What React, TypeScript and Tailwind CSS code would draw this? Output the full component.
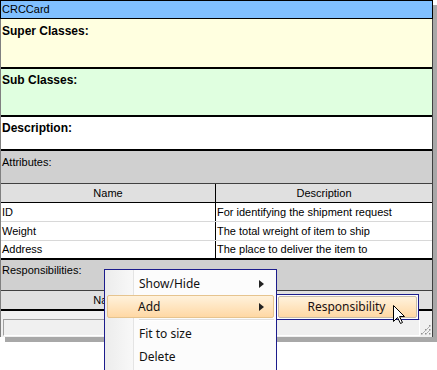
import React from 'react';

const cardFont = { fontFamily: '"Liberation Sans", Arial, sans-serif' };
const menuFont = { fontFamily: '"Noto Sans", "Open Sans", sans-serif' };

const attributes = [
  { name: 'ID', desc: 'For identifying the shipment request' },
  { name: 'Weight', desc: 'The total wreight of item to ship' },
  { name: 'Address', desc: 'The place to deliver the item to' },
];

const Arrow = () => (
  <svg width="5" height="8" viewBox="0 0 5 8" className="shrink-0">
    <path d="M0 0 L5 4 L0 8 Z" fill="#222" />
  </svg>
);

const TableHeader = ({ thick, showDesc = true }: { thick?: boolean; showDesc?: boolean }) => (
  <div className={`flex h-[19px] bg-[#e0e0e0] border-b-black ${thick ? 'h-[20px] border-b-2' : 'border-b'}`}>
    <div className="w-[215px] border-r border-black flex items-center justify-center">Name</div>
    <div className="flex-1 flex items-center justify-center">{showDesc && 'Description'}</div>
  </div>
);

export default function App() {
  return (
    <div className="relative w-[437px] h-[370px] bg-white overflow-hidden text-[11px] text-black" style={cardFont}>
      {/* Card */}
      <div className="w-[433px] shadow-[5px_5px_0_#a8a8a8] border-x border-l-[#808080] border-r-[#404040]">
        {/* Header */}
        <div className="h-[19px] bg-[#80c0ff] border-t border-b border-black flex items-center pl-[1px] -mx-px border-x border-x-black">
          CRCCard
        </div>
        <div className="h-[50px] bg-[#ffffe0] border-b-2 border-black font-bold text-[12px] pl-[1px] pt-[3px]">Super Classes:</div>
        <div className="h-[48px] bg-[#e0ffe0] border-b-2 border-black font-bold text-[12px] pl-[1px] pt-[2px]">Sub Classes:</div>
        <div className="h-[34px] bg-white border-b-2 border-black font-bold text-[12px] pl-[1px] pt-[2px]">Description:</div>
        <div className="h-[33px] bg-[#d0d0d0] border-b border-[#404040] pl-[1px] pt-[3px]">Attributes:</div>
        <TableHeader />
        {attributes.map((a, i) => (
          <div
            key={a.name}
            className={`flex bg-white ${i === attributes.length - 1 ? 'h-[19px] border-b-2 border-black' : 'h-[19px] border-b border-[#d8d8d8]'}`}
          >
            <div className="w-[215px] border-r border-black flex items-center pl-[1px]">{a.name}</div>
            <div className="flex-1 flex items-center pl-[1px]">{a.desc}</div>
          </div>
        ))}
        <div className="h-[31px] bg-[#d0d0d0] border-b border-[#404040] pl-[1px] pt-[2px]">Responsibilities:</div>
        <TableHeader thick showDesc={false} />
        <div className="h-[26px] bg-[#f0f0f0] pt-[8px] pl-[2px] pr-[12px]">
          <div className="h-[17px] border border-[#a0a0a0] border-b-white border-r-white bg-[#f0f0f0]" />
        </div>
      </div>

      {/* Resize grip */}
      <svg className="absolute left-[420px] top-[324px]" width="11" height="11" viewBox="0 0 11 11">
        {[[9, 1], [5, 5], [9, 5], [1, 9], [5, 9], [9, 9]].map(([x, y]) => (
          <rect key={`${x}-${y}`} x={x} y={y} width="1.5" height="1.5" fill="#909090" />
        ))}
        <path d="M10 2 L2 10 M10 6 L6 10" stroke="#b0b0b0" strokeWidth="1" />
      </svg>

      {/* Context menu */}
      <div
        className="absolute left-[104px] top-[269px] w-[173px] h-[110px] border border-[#1c1c8c] bg-[#fcfcfc] text-[12px] text-[#111] pt-[2px]"
        style={menuFont}
      >
        <div className="absolute left-0 top-0 bottom-0 w-[28px] bg-gradient-to-r from-[#ececec] to-[#f8f8f8]" />
        <div className="absolute left-[28px] top-0 bottom-0 w-px bg-[#e4e4e4]" />
        <div className="relative h-[23px] flex items-center pl-[32px] pr-[10px] mx-[2px]">
          <span className="flex-1">Show/Hide</span>
          <Arrow />
        </div>
        <div className="relative h-[23px] flex items-center pl-[30px] pr-[9px] mx-[2px] rounded-[2px] border border-[#e6c48f] bg-gradient-to-b from-[#fff2dc] to-[#ffd8a4]">
          <span className="flex-1">Add</span>
          <Arrow />
        </div>
        <div className="relative h-[4px] ml-[34px] mr-[2px] flex flex-col justify-center">
          <div className="h-px bg-[#e0e0e0]" />
          <div className="h-px bg-white" />
        </div>
        <div className="relative h-[23px] flex items-center pl-[32px] mx-[2px]">Fit to size</div>
        <div className="relative h-[23px] flex items-center pl-[32px] mx-[2px]">Delete</div>
      </div>

      {/* Submenu */}
      <div
        className="absolute left-[276px] top-[294px] w-[143px] h-[26px] border border-[#1c1c8c] bg-[#fcfcfc] p-[1px] text-[12px] text-[#1a1010]"
        style={menuFont}
      >
        <div className="h-full rounded-[2px] border border-[#c8bca8] bg-gradient-to-b from-[#fff2dc] to-[#ffd8a4] flex items-center justify-center pr-[2px]">
          Responsibility
        </div>
      </div>

      {/* Mouse cursor */}
      <svg className="absolute left-[393px] top-[305px]" width="13" height="20" viewBox="0 0 13 20">
        <path d="M0.5 0.5 L0.5 16.5 L4.5 12.5 L7.5 18.5 L9.5 17.5 L6.5 11.5 L11.5 11.5 Z" fill="white" stroke="black" strokeWidth="1" strokeLinejoin="miter" />
      </svg>
    </div>
  );
}
